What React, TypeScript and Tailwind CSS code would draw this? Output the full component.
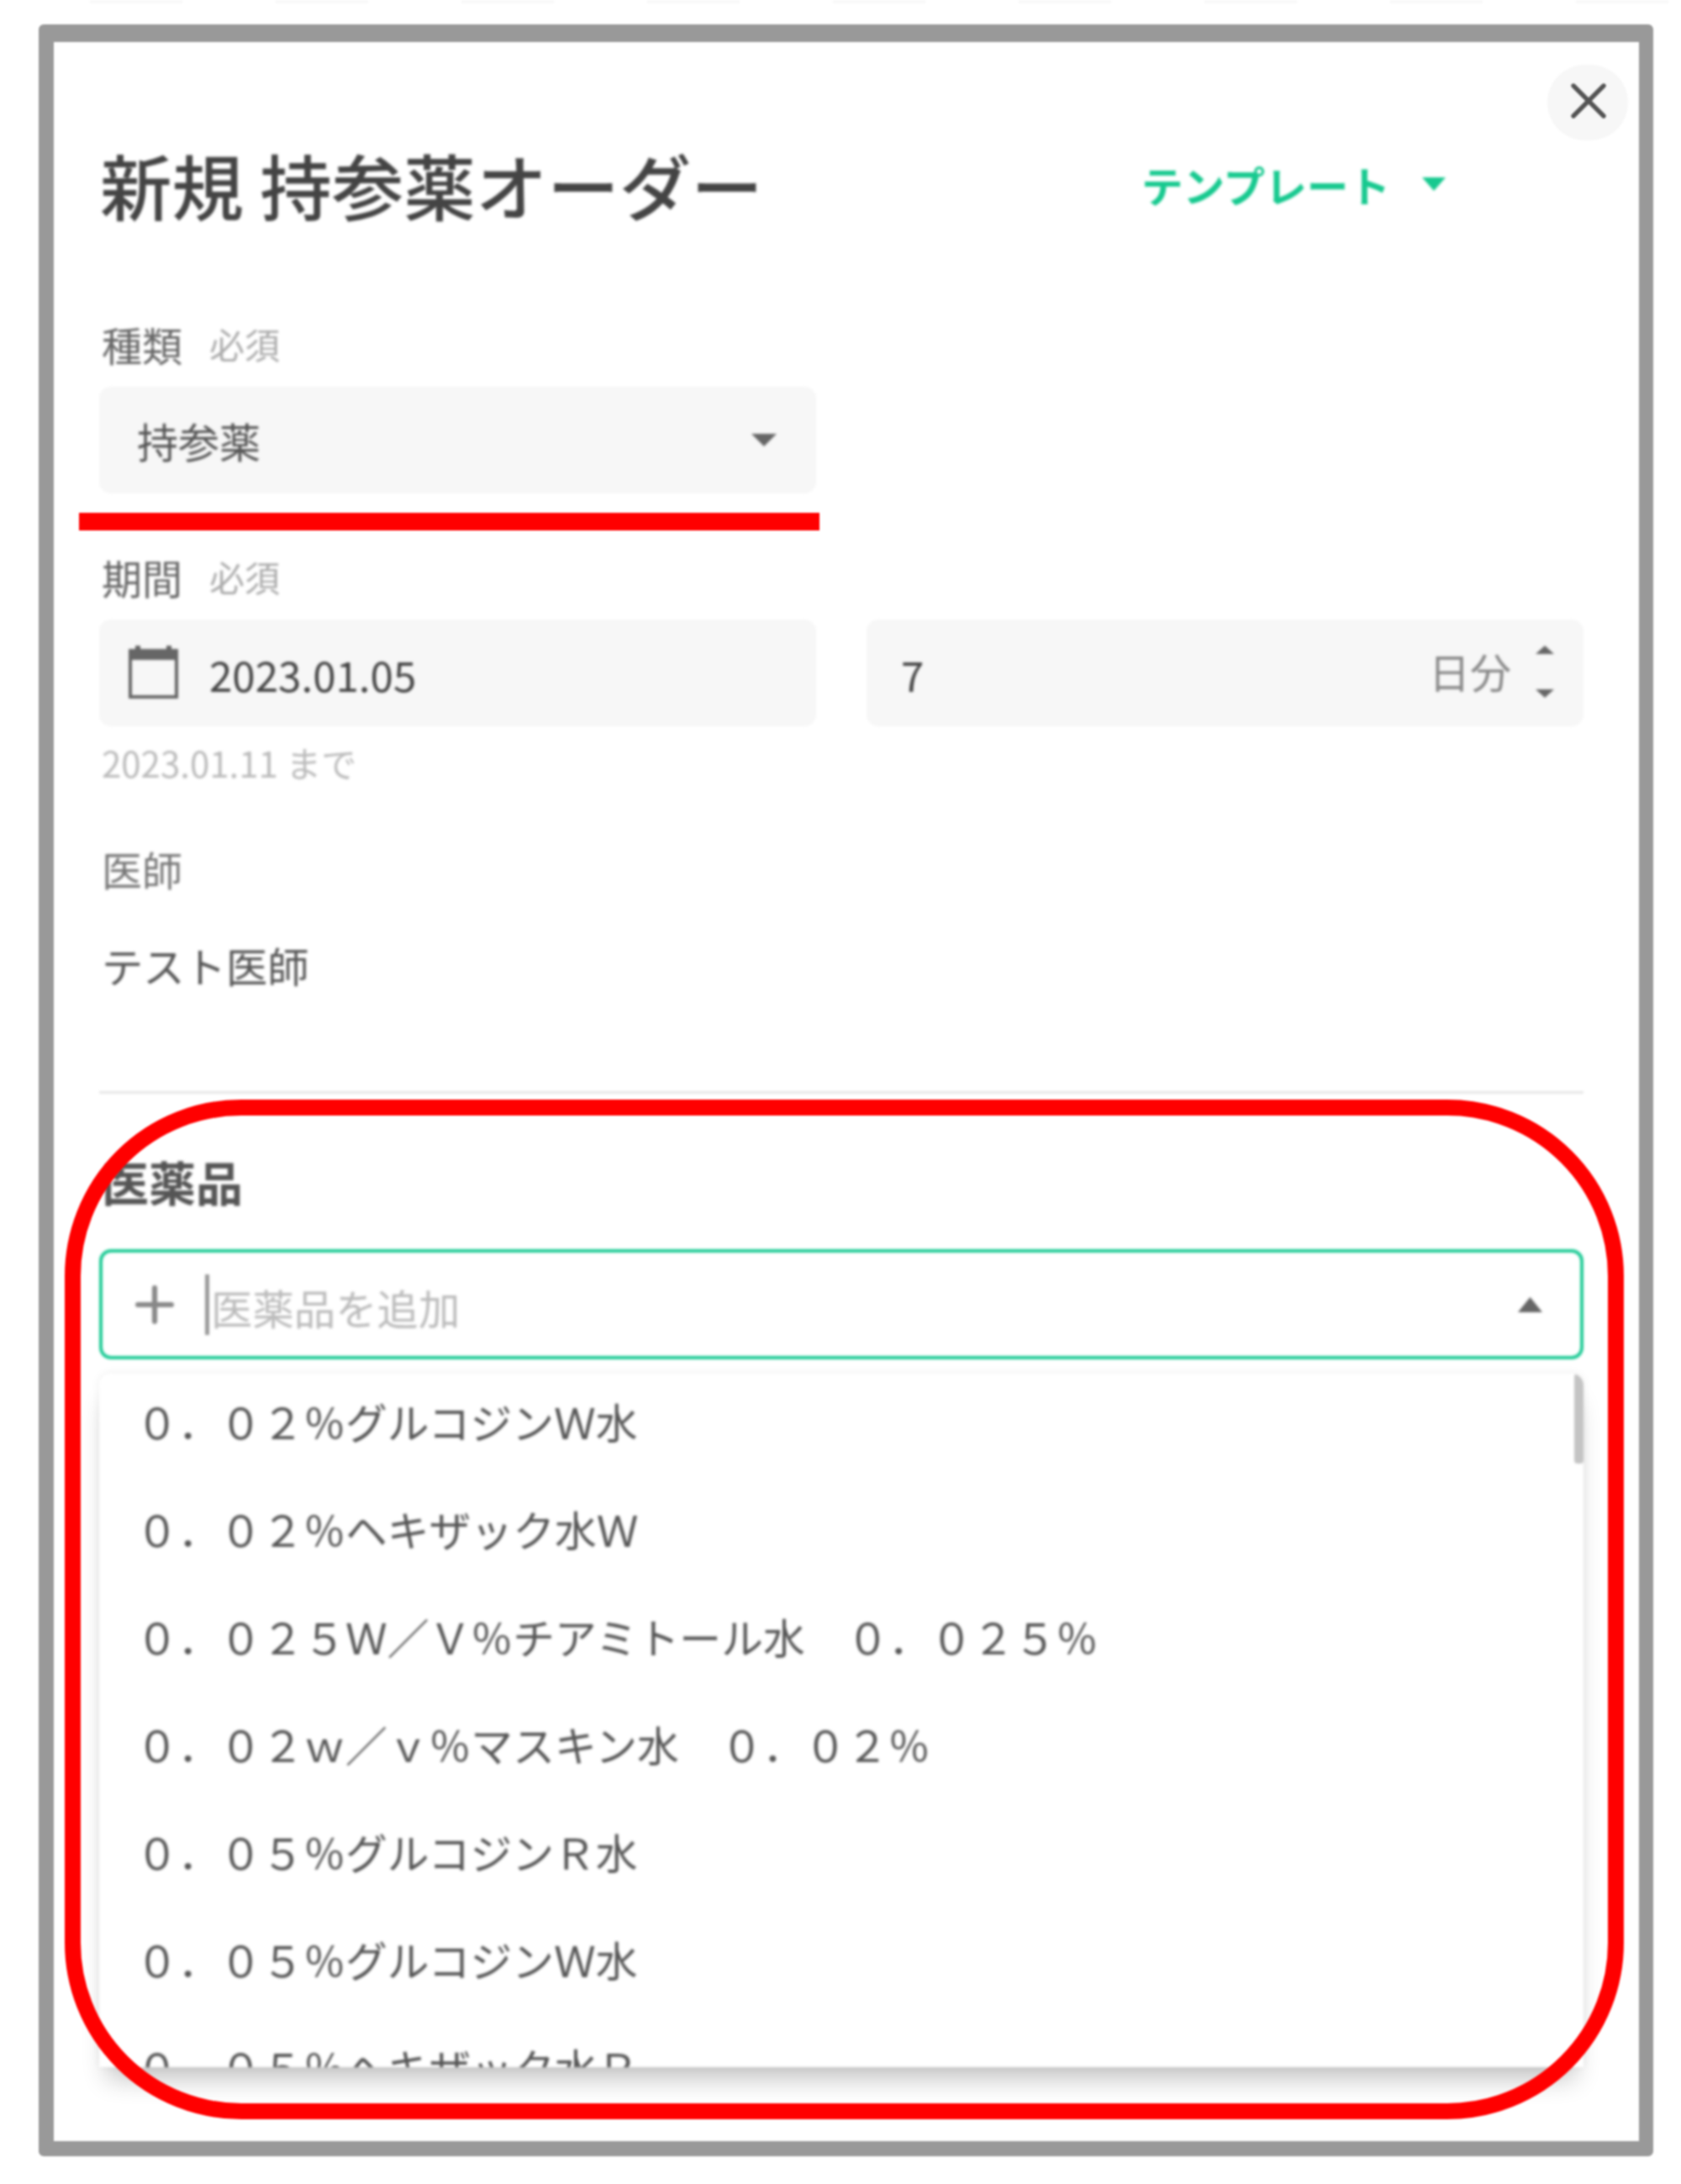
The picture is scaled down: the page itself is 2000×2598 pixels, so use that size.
import React from 'react';
import { X, Plus } from 'lucide-react';

const medicines = [
  '０．０２％グルコジンＷ水',
  '０．０２％ヘキザック水Ｗ',
  '０．０２５Ｗ／Ｖ％チアミトール水　０．０２５％',
  '０．０２ｗ／ｖ％マスキン水　０．０２％',
  '０．０５％グルコジンＲ水',
  '０．０５％グルコジンＷ水',
  '０．０５％ヘキザック水Ｒ',
];

const Caret: React.FC<{ up?: boolean; w: number; h: number; className: string }> = ({ up, w, h, className }) => (
  <svg width={w} height={h} viewBox="0 0 10 6" preserveAspectRatio="none" className={className}>
    <polygon points={up ? '5,0 10,6 0,6' : '0,0 10,0 5,6'} fill="currentColor" />
  </svg>
);

const FieldLabel: React.FC<{ label: string; required?: boolean; className: string }> = ({ label, required, className }) => (
  <div className={`flex items-center h-[50px] pl-[3px] ${className}`}>
    <span className="text-[48px] leading-[50px] text-[#666]">{label}</span>
    {required && <span className="ml-[32px] text-[42px] leading-[50px] text-[#aaa]">必須</span>}
  </div>
);

export default function App() {
  return (
    <div className="w-[2000px] h-[2598px] bg-white overflow-hidden blur-[0.8px] font-['Noto_Sans_CJK_JP',sans-serif]">
      <div className="flex h-[4px] pl-[107px] gap-[111px]">
        {Array.from({ length: 9 }).map((_, i) => (
          <div key={i} className="w-[110px] bg-[#f9f9f9]" />
        ))}
      </div>

      <div className="relative ml-[46px] mt-[25px] w-[1921px] h-[2536px] bg-white rounded-[6px] border-solid border-[#999] border-t-[21px] border-l-[18px] border-r-[17px] border-b-[18px]">
        <button className="absolute right-[13px] top-[27px] w-[96px] h-[90px] rounded-full bg-[#f7f7f7] flex items-center justify-center text-[#555]">
          <X size={72} strokeWidth={1.8} className="-mt-[5px] ml-[2px]" />
        </button>

        <div className="pl-[54px] pr-[66px] pt-[119px] blur-[1.1px]">
          <div className="flex items-center h-[100px]">
            <h1 className="text-[85.5px] leading-[100px] font-medium text-[#444] pl-[1px]">新規 持参薬オーダー</h1>
            <button className="ml-auto mr-[164px] flex items-center text-[#17c98f]">
              <span className="text-[49.6px] leading-[60px] font-bold">テンプレート</span>
              <Caret w={28} h={16} className="ml-[38px]" />
            </button>
          </div>

          <FieldLabel label="種類" required className="mt-[115px]" />
          <div className="mt-[26px] w-[853px] h-[127px] rounded-[14px] bg-[#f7f7f7] flex items-center pl-[45px] pr-[47px]">
            <span className="text-[49px] leading-[60px] text-[#555]">持参薬</span>
            <Caret w={30} h={15} className="ml-auto text-[#666]" />
          </div>

          <FieldLabel label="期間" required className="mt-[74px]" />
          <div className="mt-[26px] flex gap-[60px]">
            <div className="w-[853px] h-[127px] rounded-[14px] bg-[#f7f7f7] flex items-center pl-[35px]">
              <svg width={59} height={63} viewBox="0 0 59 63" className="text-[#666] -mt-[3px]">
                <path d="M8 0h6v4h31V0h6v4h8v59H0V4h8z M4 17v42h51V17z" fill="currentColor" fillRule="evenodd" />
              </svg>
              <span className="ml-[37px] mt-[3px] text-[49.3px] leading-[60px] text-[#444]">2023.01.05</span>
            </div>
            <div className="w-[853px] h-[127px] rounded-[14px] bg-[#f7f7f7] flex items-center pl-[41px] pr-[35px]">
              <span className="mt-[3px] text-[49.3px] leading-[60px] text-[#444]">7</span>
              <span className="ml-auto text-[49px] leading-[60px] text-[#888] -mt-[6px]">日分</span>
              <div className="ml-[29px] -mt-[4px] flex flex-col gap-[42px] text-[#666]">
                <Caret up w={22} h={10} className="" />
                <Caret w={22} h={10} className="" />
              </div>
            </div>
          </div>

          <div className="mt-[21px] pl-[3px] text-[42px] leading-[44px] text-[#bbb]">2023.01.11 まで</div>
          <div className="mt-[79px] pl-[3px] text-[48px] leading-[50px] text-[#777]">医師</div>
          <div className="mt-[65px] pl-[3px] text-[49.3px] leading-[50px] text-[#555]">テスト医師</div>
          <div className="mt-[125px] h-[3px] bg-[#e6e6e6]" />

          <div className="mt-[74px] pl-[3px] text-[56px] leading-[60px] font-bold text-[#555]">医薬品</div>

          <div className="mt-[51px] h-[131px] rounded-[14px] border-[4px] border-solid border-[#1fcb96] flex items-center pl-[40px] pr-[45px]">
            <Plus size={68} strokeWidth={2.2} className="text-[#888] -ml-[12px] shrink-0" />
            <div className="ml-[26px] w-[5px] h-[72px] bg-[#999] shrink-0" />
            <span className="ml-[2px] text-[49.4px] leading-[60px] text-[#bbb] mt-[6px]">医薬品を追加</span>
            <Caret up w={29} h={18} className="ml-auto text-[#666]" />
          </div>

          <div className="relative mt-[17px] h-[825px] rounded-t-[14px] overflow-hidden shadow-[0_24px_30px_-10px_rgba(0,0,0,0.24),0_0_12px_rgba(0,0,0,0.07)]">
            {medicines.map((name) => (
              <div key={name} className="h-[128px] pb-[16px] flex items-center pl-[44px] text-[49.8px] leading-[60px] text-[#555] whitespace-pre">
                {name}
              </div>
            ))}
            <div className="absolute right-0 top-0 w-[11px] h-[107px] rounded-[4px] bg-[#c4c4c4]" />
          </div>
        </div>

        {/* red annotations drawn over the form */}
        <div className="absolute left-[30px] top-[560px] w-[881px] h-[21px] bg-[#ff0000]" />
        <div className="absolute left-[13px] top-[1258px] w-[1855px] h-[1213px] rounded-[210px] border-[19px] border-solid border-[#ff0000]" />
      </div>
    </div>
  );
}
